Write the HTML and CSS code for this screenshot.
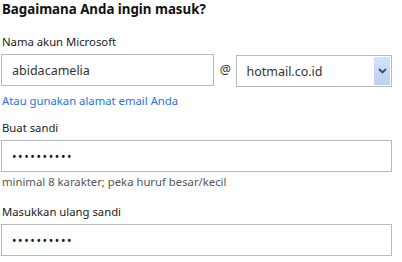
FILE: index.html
```html
<!DOCTYPE html>
<html lang="id">
<head>
    <meta charset="UTF-8">
    <title>Bagaimana Anda ingin masuk?</title>
    <link rel="stylesheet" href="styles.css">
</head>
<body>
    <div class="signup">
        <h2>Bagaimana Anda ingin masuk?</h2>

        <div class="form-group account">
            <label for="username">Nama akun Microsoft</label>
            <div class="account-row">
                <input type="text" id="username" class="field" value="abidacamelia">
                <span class="at">@</span>
                <div class="select">
                    <span class="select-value">hotmail.co.id</span>
                    <span class="select-btn">
                        <svg width="9" height="6" viewBox="0 0 9 6"><path d="M1 1l3.5 3.5L8 1" fill="none" stroke="#3a5070" stroke-width="1.8"/></svg>
                    </span>
                </div>
            </div>
            <a href="#" class="alt-link">Atau gunakan alamat email Anda</a>
        </div>

        <div class="form-group password">
            <label for="password">Buat sandi</label>
            <input type="password" id="password" class="field" value="abcdefghij">
            <small>minimal 8 karakter; peka huruf besar/kecil</small>
        </div>

        <div class="form-group confirm">
            <label for="confirmPassword">Masukkan ulang sandi</label>
            <input type="password" id="confirmPassword" class="field" value="abcdefghij">
        </div>
    </div>
</body>
</html>
```

FILE: styles.css
```css
body {
    margin: 0;
    padding: 0;
    background: #fff;
    font-family: "Noto Sans", Arial, sans-serif;
    color: #222;
}

.signup {
    width: 391px;
    padding: 0 0 0 1px;
}

.signup h2 {
    margin: 0 0 0 1px;
    font-size: 13.3px;
    font-weight: bold;
    line-height: 18px;
    color: #111;
}

.form-group.account {
    margin-top: 16px;
}

.form-group.password {
    margin-top: 11px;
}

.form-group.confirm {
    margin-top: 14px;
}

.form-group label {
    display: block;
    margin: 0 0 4px 1px;
    font-size: 11.3px;
    line-height: 16px;
    color: #222;
}

.field {
    box-sizing: border-box;
    display: block;
    width: 100%;
    height: 32px;
    margin: 0;
    padding: 0 10px;
    border: 1px solid #b9b9b9;
    background: #fff;
    font-family: "Noto Sans", Arial, sans-serif;
    font-size: 12.5px;
    color: #333;
    outline: none;
}

.field[type="password"] {
    font-size: 12px;
    letter-spacing: 1.6px;
    color: #1a1a1a;
}

.account-row {
    display: flex;
    align-items: flex-start;
}

.account-row .field {
    width: 214px;
}

.at {
    width: 22px;
    text-align: center;
    font-size: 12.5px;
    line-height: 32px;
    color: #333;
}

.select {
    box-sizing: border-box;
    display: flex;
    align-items: center;
    justify-content: space-between;
    width: 156px;
    height: 32px;
    margin-top: 1px;
    padding: 0 1px 0 9px;
    border: 1px solid #b9b9b9;
    font-size: 12.5px;
    color: #333;
}

.select-btn {
    display: flex;
    align-items: center;
    justify-content: center;
    width: 16px;
    height: 28px;
    background: linear-gradient(#d6e2fa, #bccff5);
}

.alt-link {
    display: block;
    margin: 6px 0 0 1px;
    font-size: 11.3px;
    line-height: 16px;
    color: #2672ec;
    text-decoration: none;
}

.form-group small {
    display: block;
    margin: 2px 0 0 1px;
    font-size: 11.3px;
    line-height: 16px;
    color: #555;
}
```
